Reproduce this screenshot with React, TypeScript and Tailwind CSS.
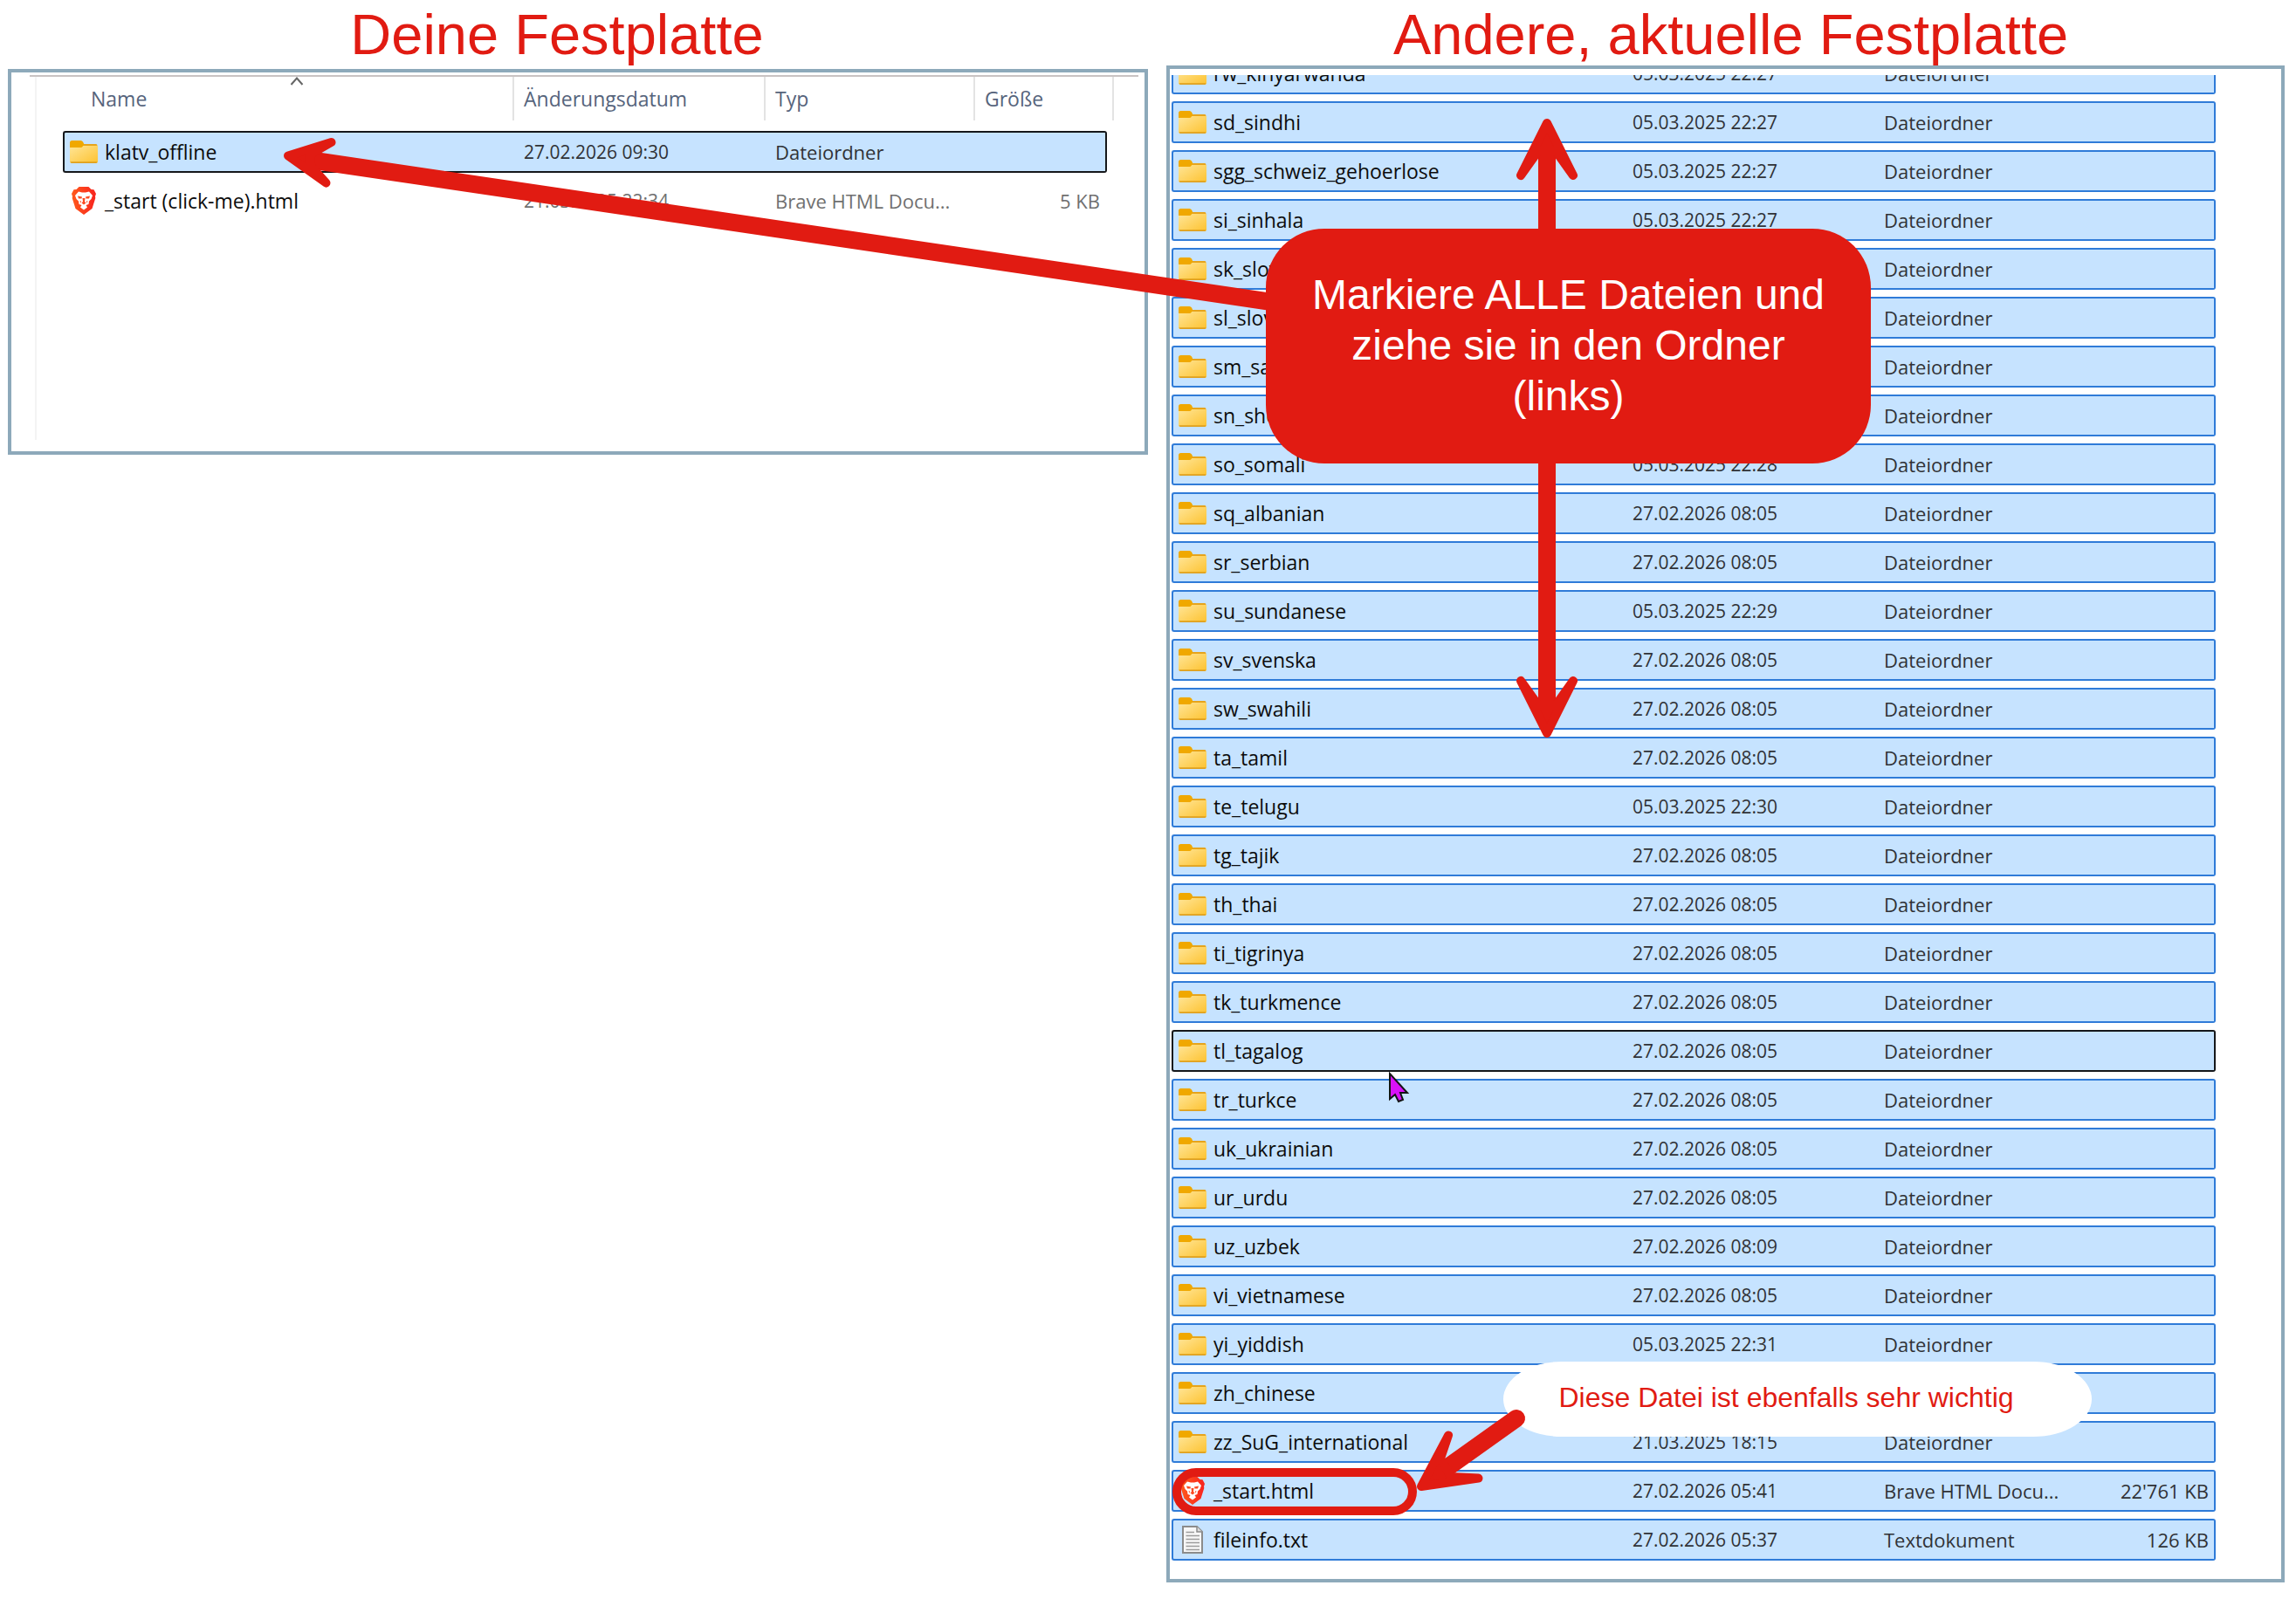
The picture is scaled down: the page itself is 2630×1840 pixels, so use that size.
import React from 'react';

type IconKind = 'folder' | 'brave' | 'text';

interface FileEntry {
  name: string;
  date: string;
  type?: string;
  size?: string;
  icon?: IconKind;
  state?: 'selected' | 'focused' | 'plain';
}

const localFiles: FileEntry[] = [
  { name: 'klatv_offline', date: '27.02.2026 09:30', state: 'focused' },
  { name: '_start (click-me).html', date: '21.03.2025 22:34', type: 'Brave HTML Docu...', size: '5 KB', icon: 'brave', state: 'plain' },
];

const remoteFiles: FileEntry[] = [
  { name: 'rw_kinyarwanda', date: '05.03.2025 22:27' },
  { name: 'sd_sindhi', date: '05.03.2025 22:27' },
  { name: 'sgg_schweiz_gehoerlose', date: '05.03.2025 22:27' },
  { name: 'si_sinhala', date: '05.03.2025 22:27' },
  { name: 'sk_slovak', date: '27.02.2026 08:05' },
  { name: 'sl_slovenian', date: '27.02.2026 08:05' },
  { name: 'sm_samoan', date: '05.03.2025 22:28' },
  { name: 'sn_shona', date: '05.03.2025 22:28' },
  { name: 'so_somali', date: '05.03.2025 22:28' },
  { name: 'sq_albanian', date: '27.02.2026 08:05' },
  { name: 'sr_serbian', date: '27.02.2026 08:05' },
  { name: 'su_sundanese', date: '05.03.2025 22:29' },
  { name: 'sv_svenska', date: '27.02.2026 08:05' },
  { name: 'sw_swahili', date: '27.02.2026 08:05' },
  { name: 'ta_tamil', date: '27.02.2026 08:05' },
  { name: 'te_telugu', date: '05.03.2025 22:30' },
  { name: 'tg_tajik', date: '27.02.2026 08:05' },
  { name: 'th_thai', date: '27.02.2026 08:05' },
  { name: 'ti_tigrinya', date: '27.02.2026 08:05' },
  { name: 'tk_turkmence', date: '27.02.2026 08:05' },
  { name: 'tl_tagalog', date: '27.02.2026 08:05', state: 'focused' },
  { name: 'tr_turkce', date: '27.02.2026 08:05' },
  { name: 'uk_ukrainian', date: '27.02.2026 08:05' },
  { name: 'ur_urdu', date: '27.02.2026 08:05' },
  { name: 'uz_uzbek', date: '27.02.2026 08:09' },
  { name: 'vi_vietnamese', date: '27.02.2026 08:05' },
  { name: 'yi_yiddish', date: '05.03.2025 22:31' },
  { name: 'zh_chinese', date: '27.02.2026 08:05' },
  { name: 'zz_SuG_international', date: '21.03.2025 18:15' },
  { name: '_start.html', date: '27.02.2026 05:41', type: 'Brave HTML Docu...', size: "22'761 KB", icon: 'brave' },
  { name: 'fileinfo.txt', date: '27.02.2026 05:37', type: 'Textdokument', size: '126 KB', icon: 'text' },
];

const rowStyles = {
  selected: 'bg-[#c6e3ff] border-[#2f7bd8] text-[#303236]',
  focused: 'bg-[#c6e3ff] border-[#15171a] text-[#303236]',
  plain: 'border-transparent text-[#707070]',
};

const FolderIcon = () => (
  <svg viewBox="0 0 32 26" className="w-8 h-[26px] shrink-0" aria-hidden="true">
    <path d="M0 6H32V24Q32 26 30 26H2Q0 26 0 24Z" fill="url(#folderFront)" />
    <path d="M14 4H30Q31.500 4 31.500 6H14Z" fill="#e6a41c" />
    <path d="M0 2.500Q0 0 2.500 0H12.500Q14 0 15 1.500L16 3.500V5L14.500 7Q14 8 12.500 8H0Z" fill="#f0a800" />
    <path d="M0.500 24.200H31.500Q31.200 26 30 26H2Q0.800 26 0.500 24.200Z" fill="#dfa01e" />
  </svg>
);

const BraveIcon = () => (
  <svg viewBox="0 0 28 32" className="w-7 h-8 mx-[2px] shrink-0" aria-hidden="true">
    <path d="M8.500 0H19.500L22.500 3L25.500 3.200L28 8L27 11L27.300 13L23.500 25L14 32L4.500 25L0.700 13L1 11L0 8L2.500 3.200L5.500 3Z" fill="url(#braveShield)" />
    <path d="M8 5.500L12 6.500H16L20 5.500L24 10L22.500 14L20 16.500L19.500 20L16.500 21L18 23.500L14 26.500L10 23.500L11.500 21L8.500 20L8 16.500L5.500 14L4 10Z" fill="#fff" />
    <path d="M7 10.500L12 11.500L11.500 13.500L8 13.500ZM21 10.500L16 11.500L16.500 13.500L20 13.500ZM12.500 13H15.500L15 17L16.500 18.500L14 20.500L11.500 18.500L13 17ZM9.500 16L11 16.500L10.500 19ZM18.500 16L17 16.500L17.500 19Z" fill="#fb4a22" />
  </svg>
);

const TextFileIcon = () => (
  <svg viewBox="0 0 24 32" className="w-6 h-8 mx-1 shrink-0" aria-hidden="true">
    <path d="M1 1H17L23 7V31H1Z" fill="#f7f7f7" stroke="#8b8b8b" strokeWidth="2" />
    <path d="M17 1V7H23" fill="#dcdcdc" stroke="#8b8b8b" strokeWidth="1.500" />
    <path d="M4.500 7.500H14M4.500 11.500H20M4.500 15.500H20M4.500 19.500H20M4.500 23.500H20M4.500 27.500H20" stroke="#9b9b9b" strokeWidth="1.700" />
  </svg>
);

const icons = {
  folder: <FolderIcon />,
  brave: <BraveIcon />,
  text: <TextFileIcon />,
};

const HeaderRow = () => (
  <thead>
    <tr className="text-left text-[#56647c]">
      <th scope="col" className="p-0 pb-1 font-normal">
        <div className="relative flex items-center h-[50px] ml-5 pl-3">
          Name
          <svg viewBox="0 0 16 10" className="absolute top-0 left-1/2 -translate-x-1/2 w-4 h-[10px]" aria-hidden="true">
            <path d="M1.500 9L8 1.500L14.500 9" fill="none" stroke="#666" strokeWidth="2" />
          </svg>
        </div>
      </th>
      {['Änderungsdatum', 'Typ', 'Größe'].map((label) => (
        <th key={label} scope="col" className="p-0 pb-1 font-normal">
          <div className="flex items-center h-[50px] pl-[11px] border-l-2 border-[#e3e3e3]">{label}</div>
        </th>
      ))}
      <td className="p-0 pb-1">
        <div className="h-[50px] border-r-2 border-[#e3e3e3]" />
      </td>
    </tr>
  </thead>
);

const FileTable = ({ files, label, withHeader = false }: { files: FileEntry[]; label: string; withHeader?: boolean }) => (
  <table
    aria-label={label}
    className="w-full table-fixed border-separate border-spacing-x-0 border-spacing-y-2 font-['Open_Sans','Noto_Sans',sans-serif] text-[23px] leading-[30px] whitespace-nowrap"
  >
    <colgroup>
      <col />
      <col className="w-[288px]" />
      <col className="w-[240px]" />
      <col className="w-[153px]" />
      {withHeader && <col className="w-[8px]" />}
    </colgroup>
    {withHeader && <HeaderRow />}
    <tbody>
      {files.map((file) => {
        const style = rowStyles[file.state ?? 'selected'];
        return (
          <tr key={file.name} className="h-12">
            <td className={`p-0 pl-[6px] border-y-2 border-l-2 rounded-l-[3px] ${style}`}>
              <div className="flex items-center gap-2 text-[#0c0c0c]">
                {icons[file.icon ?? 'folder']}
                {file.name}
              </div>
            </td>
            <td className={`p-0 pl-[13px] border-y-2 text-[21px] ${style}`}>{file.date}</td>
            <td className={`p-0 pl-[13px] border-y-2 text-[22px] ${style}`}>{file.type ?? 'Dateiordner'}</td>
            <td className={`p-0 pr-[6px] border-y-2 border-r-2 rounded-r-[3px] text-right text-[22px] ${style}`}>{file.size}</td>
          </tr>
        );
      })}
    </tbody>
  </table>
);

// Arrows and mouse pointer, drawn from the left edge of the right column
const Arrows = () => (
  <svg
    viewBox="1336 0 1281 1813"
    className="absolute top-0 left-0 w-[1281px] h-[1813px] overflow-visible pointer-events-none"
    aria-hidden="true"
  >
    <g fill="#e11b12" stroke="#e11b12" strokeWidth="10" strokeLinejoin="round">
      <path d="M350 182.500L1460 346.500" strokeWidth="20" />
      <path d="M330 178.500L379.500 163L356 176.500L355 189L373.500 209.500Z" />
      <path d="M1772 170V812" strokeWidth="20" />
      <path d="M1772 141L1742 201L1762 173H1782L1802 201Z" />
      <path d="M1772 840L1742 780L1762 808H1782L1802 780Z" />
      <path d="M1650 1687L1737 1625" strokeWidth="20" strokeLinecap="round" />
      <path d="M1628 1703L1659 1644.500L1650 1671L1662 1692L1693.500 1693.500Z" />
    </g>
    <path d="M1592 1230V1259L1598 1254L1602 1262L1607 1260L1604 1252H1612Z" fill="#d912f8" stroke="#141414" strokeWidth="2" />
  </svg>
);

const App = () => {
  return (
    <main className="min-h-screen bg-white pl-[9px] pr-[13px] grid grid-cols-[1306fr_1281fr] gap-[21px] items-start overflow-hidden font-['Liberation_Sans',Arial,sans-serif]">
      {/* Shared icon gradients */}
      <svg className="absolute w-0 h-0" aria-hidden="true">
        <defs>
          <linearGradient id="folderFront" x1="0" y1="0" x2="1" y2="1">
            <stop offset="0" stopColor="#ffe597" />
            <stop offset="1" stopColor="#fdc22f" />
          </linearGradient>
          <linearGradient id="braveShield" x1="0" y1="0" x2="1" y2="0">
            <stop offset="0" stopColor="#ff5a1c" />
            <stop offset="1" stopColor="#f8231f" />
          </linearGradient>
        </defs>
      </svg>

      <section>
        <h1 className="pt-1 pr-12 mb-1 text-center text-[65px] leading-[71px] text-[#e11b12]">Deine Festplatte</h1>
        <div className="border-4 border-[#8da9ba] pt-[3px] pl-[21px] pr-[7px] pb-[13px]">
          <div className="border-t-2 border-[#c8c3c3] pl-[6px]">
            <div className="min-h-[416px] border-l-2 border-[#f4f4f4] pl-[30px] pr-7 flow-root">
              <div className="-mt-2">
                <FileTable files={localFiles} label="Deine Festplatte" withHeader />
              </div>
            </div>
          </div>
        </div>
      </section>

      <section className="relative">
        <h1 className="pt-1 pl-3 text-center text-[65px] leading-[71px] text-[#e11b12]">Andere, aktuelle Festplatte</h1>
        <div className="border-4 border-[#8da9ba] pt-[7px] pl-[2px] pr-[75px] pb-[13px]">
          {/* List is scrolled down, so the first row is cut off */}
          <div className="overflow-hidden">
            <div className="-mt-[34px]">
              <FileTable files={remoteFiles} label="Andere, aktuelle Festplatte" />
            </div>
          </div>
        </div>

        <div className="absolute top-[1560px] left-[386px] w-[674px] h-[86px] pb-1 pr-[26px] flex items-center justify-center rounded-[67px/43px] bg-white text-[32px] leading-10 text-[#e11b12]">
          Diese Datei ist ebenfalls sehr wichtig
        </div>
        <div className="absolute top-[1682px] left-[7px] w-[280px] h-[54px] rounded-full border-10 border-[#e11b12]" />
        <Arrows />
        <div className="absolute top-[262px] left-[114px] w-[693px] h-[269px] px-12 pb-[2px] flex items-center justify-center rounded-[67px] bg-[#e11b12] text-center text-[48px] leading-[58px] text-white">
          Markiere ALLE Dateien und ziehe sie in den Ordner (links)
        </div>
      </section>
    </main>
  );
};

export default App;
